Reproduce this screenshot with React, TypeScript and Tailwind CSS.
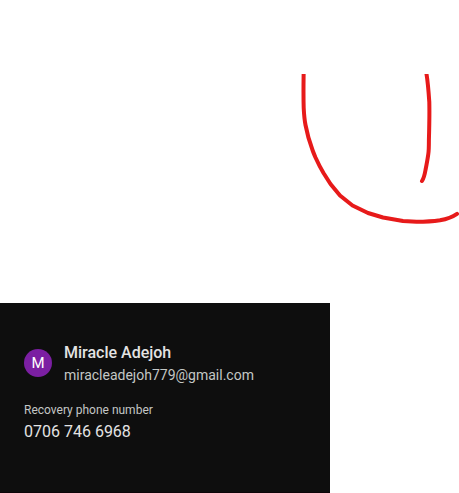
function Scribble() {
  return (
    <svg
      viewBox="0 0 160 156"
      className="h-[156px] w-[160px]"
      fill="none"
      stroke="#e71a1a"
      strokeWidth="4"
      strokeLinecap="round"
      strokeLinejoin="round"
      aria-hidden="true"
    >
      <path d="M4.700 -5C4.500 8 4.300 22 4.700 34C5 40 5.500 46 6.500 51C8 59 10.500 68 13.500 76C14.500 79 15.500 81 16.500 83.500C19 89 21.500 94 24.500 99L31.500 110L41 121.500L53.500 131.500L69 139L84 143.500L104 147L117.500 147.800C126 147.800 133 147.500 141 146.300C148 145 153 143.300 158 139.800" />
      <path d="M127 -5L127.500 0C129 9 129.500 16 130.300 28C130.600 40 130.300 52 129.900 66C129.900 72 129.800 77 129.300 80C128.500 86 127.500 91 126.500 96C125.800 100 125 104 123 107" />
    </svg>
  );
}

function AccountCard() {
  return (
    <section className="flex w-full max-w-[330px] flex-col gap-3.5 border-b border-[#0c0408] bg-[#0e0e0e] px-6 pt-[37px] pb-12">
      <div className="flex items-center gap-3">
        <div className="flex size-7 shrink-0 items-center justify-center rounded-full bg-[#7b1fa2] text-[15px] text-white">
          M
        </div>
        <div className="flex min-w-0 flex-col pt-0.5">
          <h1 className="text-base leading-[22px] font-medium text-[#e3e3e3]">Miracle Adejoh</h1>
          <p className="text-sm leading-[22px] text-[#c4c7c5]">miracleadejoh779@gmail.com</p>
        </div>
      </div>
      <div className="flex flex-col">
        <h2 className="text-xs leading-5 text-[#c4c7c5]">Recovery phone number</h2>
        <p className="text-base leading-6 text-[#e3e3e3]">0706 746 6968</p>
      </div>
    </section>
  );
}

export default function App() {
  return (
    <main className="min-h-screen bg-white font-['Google_Sans_Text',Roboto,Inter,sans-serif]">
      <div className="flex justify-end pt-[74px] pb-[73px]">
        <Scribble />
      </div>
      <AccountCard />
    </main>
  );
}
